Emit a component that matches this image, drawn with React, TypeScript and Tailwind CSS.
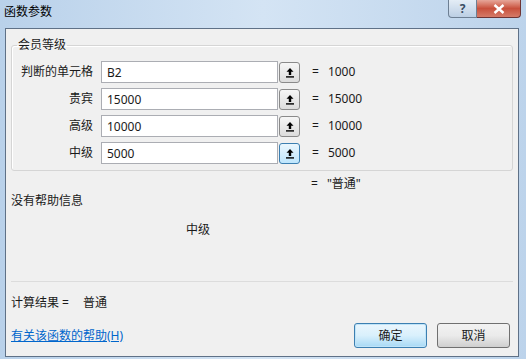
const FONT = "font-['Noto_Sans','Noto_Sans_CJK_SC',sans-serif]";

const ROWS = [
  { label: "判断的单元格", value: "B2", result: "1000" },
  { label: "贵宾", value: "15000", result: "15000" },
  { label: "高级", value: "10000", result: "10000" },
  { label: "中级", value: "5000", result: "5000", active: true },
];

function PickIcon() {
  return (
    <svg width="10" height="11" viewBox="0 0 10 11" aria-hidden>
      <path d="M5 1 L1.5 4.8 H3.8 V8 H6.2 V4.8 H8.5 Z" fill="#000" />
      <rect x="1" y="9.2" width="8" height="1.4" fill="#000" />
    </svg>
  );
}

function ArgRow({
  label,
  value,
  result,
  active,
}: {
  label: string;
  value: string;
  result: string;
  active?: boolean;
}) {
  return (
    <div className="flex h-[22px] items-center">
      <div className="w-[82px] pr-[1px] text-right">{label}</div>
      <div className="ml-[7px] flex h-[22px] w-[177px] items-center border border-[#abadb3] bg-white pl-[5px] pt-[1px]">
        {value}
      </div>
      <button
        type="button"
        className={
          active
            ? "ml-[1px] flex h-[21px] w-[21px] items-center justify-center rounded-[3px] border border-[#3c7fb1] bg-gradient-to-b from-[#eaf6fd] to-[#bee6fd]"
            : "ml-[1px] flex h-[21px] w-[21px] items-center justify-center rounded-[3px] border border-[#8a8a8a] bg-gradient-to-b from-[#f6f6f6] to-[#dcdcdc]"
        }
      >
        <PickIcon />
      </button>
      <span className="ml-[12px]">=</span>
      <span className="ml-[9px]">{result}</span>
    </div>
  );
}

export default function App() {
  return (
    <div
      className={`${FONT} flex h-[359px] w-[526px] flex-col overflow-hidden bg-gradient-to-r from-[#b9d1ea] via-[#d4e4f4] to-[#bcd3eb] text-[12px] leading-none text-[#1a1a1a]`}
    >
      <div className="flex h-[28px] shrink-0 items-start justify-between">
        <div className="pl-[4px] pt-[6px] text-[12px] text-black">函数参数</div>
        <div className="mr-[5px] flex h-[18px]">
          <div className="flex w-[29px] items-center justify-center rounded-bl-[4px] border border-t-0 border-[#6d7f93] bg-gradient-to-b from-[#e4edf6] to-[#bccfe4] text-[12px] font-bold text-[#3a4d63]">
            ?
          </div>
          <div className="flex w-[44px] items-center justify-center rounded-br-[4px] border border-l-0 border-t-0 border-[#6d3434] bg-gradient-to-b from-[#e6a699] via-[#c8503c] to-[#d57a68]">
            <svg width="12" height="10" viewBox="0 0 12 10" aria-hidden>
              <path d="M1.5 1 L10.5 9 M10.5 1 L1.5 9" stroke="#fff" strokeWidth="2.4" />
            </svg>
          </div>
        </div>
      </div>

      <div className="mb-[2px] ml-[5px] mr-[7px] flex flex-1 flex-col border border-[#5f7187] bg-[#f0f0f0] px-[5px]">
        <fieldset className="mt-[9px] rounded-[3px] border border-[#d5d5d5] px-0 pb-[6px] shadow-[inset_1px_1px_0_#fff]">
          <legend className="ml-[5px] px-[1px] leading-[14px]">会员等级</legend>
          <div className="mt-[9px] flex flex-col gap-[5px]">
            {ROWS.map((row) => (
              <ArgRow key={row.label} {...row} />
            ))}
          </div>
        </fieldset>

        <div className="mt-[7px] pl-[300px]">
          <span>=</span>
          <span className="ml-[9px]">"普通"</span>
        </div>

        <div className="mt-[5px]">没有帮助信息</div>
        <div className="mt-[17px] pl-[175px]">中级</div>

        <div className="mt-[45px] h-px bg-[#dcdcdc]" />

        <div className="mt-[15px]">
          计算结果 = <span className="ml-[11px]">普通</span>
        </div>

        <div className="mt-[14px] flex items-center justify-between">
          <a href="#" className="text-[#0066cc] underline">
            有关该函数的帮助(H)
          </a>
          <div className="mr-[3px] flex gap-[10px]">
            <button
              type="button"
              className="h-[25px] w-[73px] rounded-[3px] border border-[#3c7fb1] bg-gradient-to-b from-[#eaf6fd] via-[#d9f0fc] to-[#a7d9f5] text-[12px] shadow-[inset_0_0_0_1px_#c0e4f8]"
            >
              确定
            </button>
            <button
              type="button"
              className="h-[25px] w-[73px] rounded-[3px] border border-[#707070] bg-gradient-to-b from-[#f2f2f2] via-[#ebebeb] to-[#cfcfcf] text-[12px]"
            >
              取消
            </button>
          </div>
        </div>
      </div>
    </div>
  );
}
